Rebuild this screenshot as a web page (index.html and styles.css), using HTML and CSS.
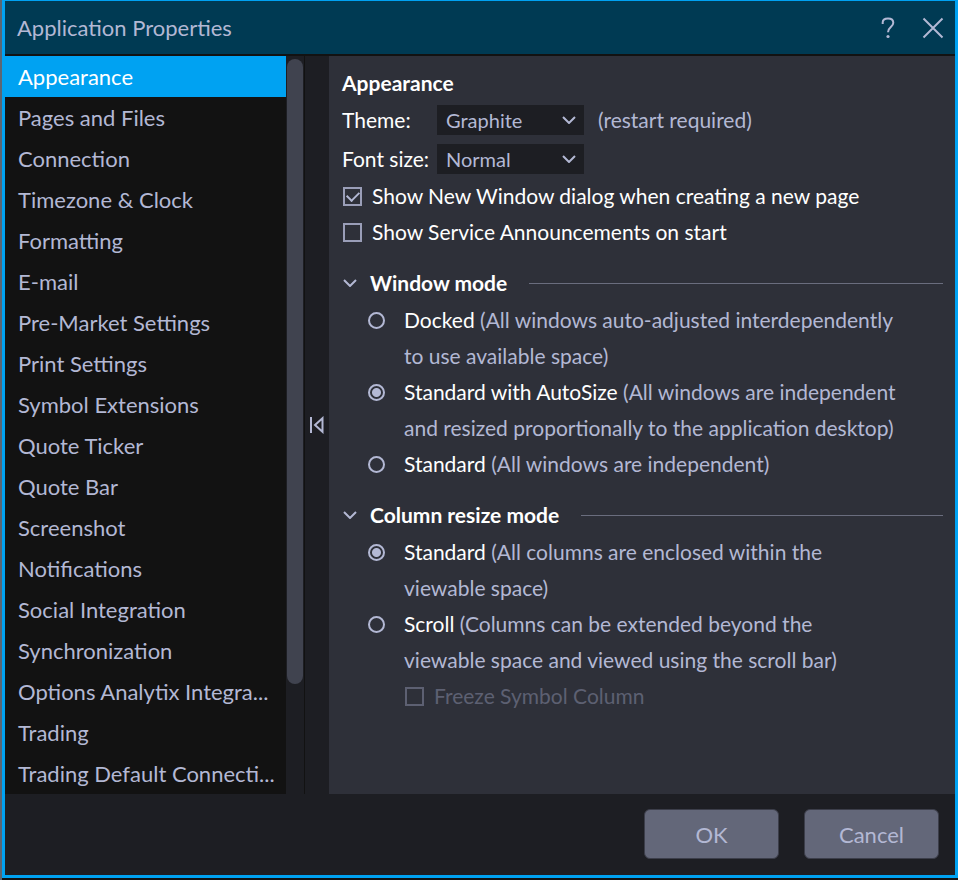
FILE: index.html
```html
<!DOCTYPE html>
<html lang="en">
<head>
<meta charset="utf-8">
<title>Application Properties</title>
<link rel="stylesheet" href="styles.css">
</head>
<body>

<div class="dialog">
  <header class="titlebar">
    <h1>Application Properties</h1>
    <button class="icon-button" aria-label="Help">
      <svg width="16" height="24" viewBox="0 0 16 24"><path d="M2.700 8V6.500C2.700 4 4.800 2.400 8 2.400S13.300 4 13.300 6.800C13.300 11 8 11.200 8 16.200"/><circle class="dot" cx="8" cy="20.500" r="1.600"/></svg>
    </button>
    <button class="icon-button" aria-label="Close">
      <svg width="22" height="22" viewBox="0 0 22 22"><path d="M1.500 1.500L20.500 20.500M20.500 1.500L1.500 20.500"/></svg>
    </button>
  </header>

  <div class="content">
    <nav class="sidebar">
      <a class="active" href="#appearance">Appearance</a>
      <a href="#pages">Pages and Files</a>
      <a href="#connection">Connection</a>
      <a href="#timezone">Timezone &amp; Clock</a>
      <a href="#formatting">Formatting</a>
      <a href="#email">E-mail</a>
      <a href="#premarket">Pre-Market Settings</a>
      <a href="#print">Print Settings</a>
      <a href="#symbols">Symbol Extensions</a>
      <a href="#ticker">Quote Ticker</a>
      <a href="#quotebar">Quote Bar</a>
      <a href="#screenshot">Screenshot</a>
      <a href="#notifications">Notifications</a>
      <a href="#social">Social Integration</a>
      <a href="#sync">Synchronization</a>
      <a href="#analytix">Options Analytix Integra...</a>
      <a href="#trading">Trading</a>
      <a href="#trading-default">Trading Default Connecti...</a>
    </nav>
    <div class="scrollbar"><div class="thumb"></div></div>
    <button class="splitter" aria-label="Collapse list">
      <svg width="16" height="18" viewBox="0 0 16 18"><path d="M2 1V17M13.500 2.200V15.800L6 9Z"/></svg>
    </button>

    <main class="panel" id="appearance">
      <h2>Appearance</h2>
      <div class="fields">
        <label for="theme">Theme:</label>
        <div class="select">
          <select id="theme"><option>Graphite</option></select>
          <svg class="chevron" width="14" height="8" viewBox="0 0 14 8"><path d="M1 1L7 7L13 1"/></svg>
        </div>
        <span class="hint">(restart required)</span>
        <label for="fontSize">Font size:</label>
        <div class="select">
          <select id="fontSize"><option>Normal</option></select>
          <svg class="chevron" width="14" height="8" viewBox="0 0 14 8"><path d="M1 1L7 7L13 1"/></svg>
        </div>
      </div>
      <label class="check"><input type="checkbox" checked>Show New Window dialog when creating a new page</label>
      <label class="check"><input type="checkbox">Show Service Announcements on start</label>

      <section>
        <h3><svg class="chevron" width="14" height="8" viewBox="0 0 14 8"><path d="M1 1L7 7L13 1"/></svg>Window mode</h3>
        <label class="radio"><input type="radio" name="windowMode"><span class="hint"><b>Docked</b> (All windows auto-adjusted interdependently<br>to use available space)</span></label>
        <label class="radio"><input type="radio" name="windowMode" checked><span class="hint"><b>Standard with AutoSize</b> (All windows are independent<br>and resized proportionally to the application desktop)</span></label>
        <label class="radio"><input type="radio" name="windowMode"><span class="hint"><b>Standard</b> (All windows are independent)</span></label>
      </section>

      <section>
        <h3><svg class="chevron" width="14" height="8" viewBox="0 0 14 8"><path d="M1 1L7 7L13 1"/></svg>Column resize mode</h3>
        <label class="radio"><input type="radio" name="columnMode" checked><span class="hint"><b>Standard</b> (All columns are enclosed within the<br>viewable space)</span></label>
        <label class="radio"><input type="radio" name="columnMode"><span class="hint"><b>Scroll</b> (Columns can be extended beyond the<br>viewable space and viewed using the scroll bar)</span></label>
        <label class="check disabled"><input type="checkbox" disabled>Freeze Symbol Column</label>
      </section>
    </main>
  </div>

  <footer class="footer">
    <button class="button">OK</button>
    <button class="button">Cancel</button>
  </footer>
</div>

</body>
</html>
```
FILE: styles.css
```css
* {
  box-sizing: border-box;
}
body {
  margin: 0;
  padding: 0 0 2px 2px;
  min-height: 100vh;
  display: flex;
  background: linear-gradient(to right, #5c6673 2px, #121212 2px);
  font-family: Lato, "Open Sans", sans-serif;
  font-size: 21px;
  color: #b3b8d4;
}
button, select {
  font: inherit;
  color: inherit;
  border: none;
  cursor: pointer;
}
svg {
  fill: none;
  stroke: #b3b8d4;
  stroke-width: 2;
}
.dialog {
  flex: 1;
  display: flex;
  flex-direction: column;
  border: 3px solid #00a2f2;
  border-top-width: 1px;
  background: #1d1e23;
}

.titlebar {
  display: flex;
  align-items: center;
  height: 55px;
  padding: 0 11px 0 12px;
  background: #003a53;
  border-bottom: 2px solid #121212;
}
.titlebar h1 {
  flex: 1;
  margin: 0;
  font-size: 22px;
  font-weight: normal;
}
.icon-button {
  display: flex;
  padding: 0;
  margin-left: 26px;
  background: none;
}
.icon-button .dot {
  fill: #b3b8d4;
  stroke: none;
}

.content {
  flex: 1;
  display: flex;
}
.sidebar {
  width: 281px;
  background: #121212;
}
.sidebar a {
  display: block;
  padding-left: 13px;
  line-height: 41px;
  font-size: 22px;
  color: inherit;
  text-decoration: none;
  white-space: nowrap;
}
.sidebar a.active {
  background: #00a2f2;
  color: white;
}
.scrollbar {
  width: 19px;
  padding: 3px 1px 0;
  border-right: 1px solid #121212;
}
.thumb {
  height: 85%;
  border-radius: 8px;
  background: #40434f;
}
.splitter {
  display: flex;
  align-items: center;
  justify-content: center;
  width: 24px;
  padding: 0;
  background: #1d1e23;
}

.panel {
  flex: 1;
  padding: 9px 12px 9px 13px;
  background: #2e3039;
  line-height: 36px;
  color: white;
}
.panel h2 {
  margin: 0 0 1px;
  font-size: 21px;
}
.hint {
  color: #b3b8d4;
}
.hint b {
  font-weight: normal;
  color: white;
}
.fields {
  display: grid;
  grid-template-columns: 95px 147px 1fr;
  row-gap: 3px;
  align-items: center;
  margin-bottom: 1px;
}
.fields .hint {
  padding-left: 14px;
}
.select {
  position: relative;
  height: 30px;
}
.select select {
  display: block;
  appearance: none;
  width: 100%;
  height: 30px;
  padding: 0 30px 0 9px;
  border-radius: 0;
  background: #1d1e23;
  color: #b3b8d4;
  font-size: 20px;
  line-height: 30px;
}
.select .chevron {
  position: absolute;
  right: 8px;
  top: 11px;
  pointer-events: none;
}

.check {
  display: flex;
  align-items: center;
}
.check input {
  appearance: none;
  width: 19px;
  height: 19px;
  margin: 0 10px 0 1px;
  border: 2px solid #9a9eb8;
}
.check input:checked {
  display: flex;
  align-items: center;
  justify-content: center;
}
.check input:checked::before {
  content: "";
  width: 10px;
  height: 6px;
  margin-bottom: 3px;
  border: solid #b3b8d4;
  border-width: 0 0 2px 2px;
  transform: rotate(-45deg);
}
.check.disabled {
  margin-left: 62px;
  color: #5d6072;
}
.check.disabled input {
  border-color: #5d6072;
}

section {
  margin-top: 15px;
}
section h3 {
  display: flex;
  align-items: center;
  margin: 0 0 1px;
  font-size: 21px;
}
section h3 .chevron {
  margin: 0 13px 0 1px;
}
section h3::after {
  content: "";
  flex: 1;
  height: 1px;
  margin-left: 22px;
  background: #6a6d7e;
}
.radio {
  display: flex;
  align-items: flex-start;
  padding-left: 26px;
}
.radio input {
  appearance: none;
  flex: none;
  width: 17px;
  height: 17px;
  margin: 10px 19px 0 0;
  border: 2px solid #b3b8d4;
  border-radius: 50%;
}
.radio input:checked {
  background: radial-gradient(circle, #b3b8d4 4px, transparent 5px);
}

.footer {
  display: flex;
  justify-content: flex-end;
  gap: 25px;
  padding: 15px 16px 16px;
}
.button {
  width: 135px;
  height: 50px;
  border: 1px solid #3c3e4a;
  border-radius: 6px;
  background: #636779;
  font-size: 22px;
}
```
